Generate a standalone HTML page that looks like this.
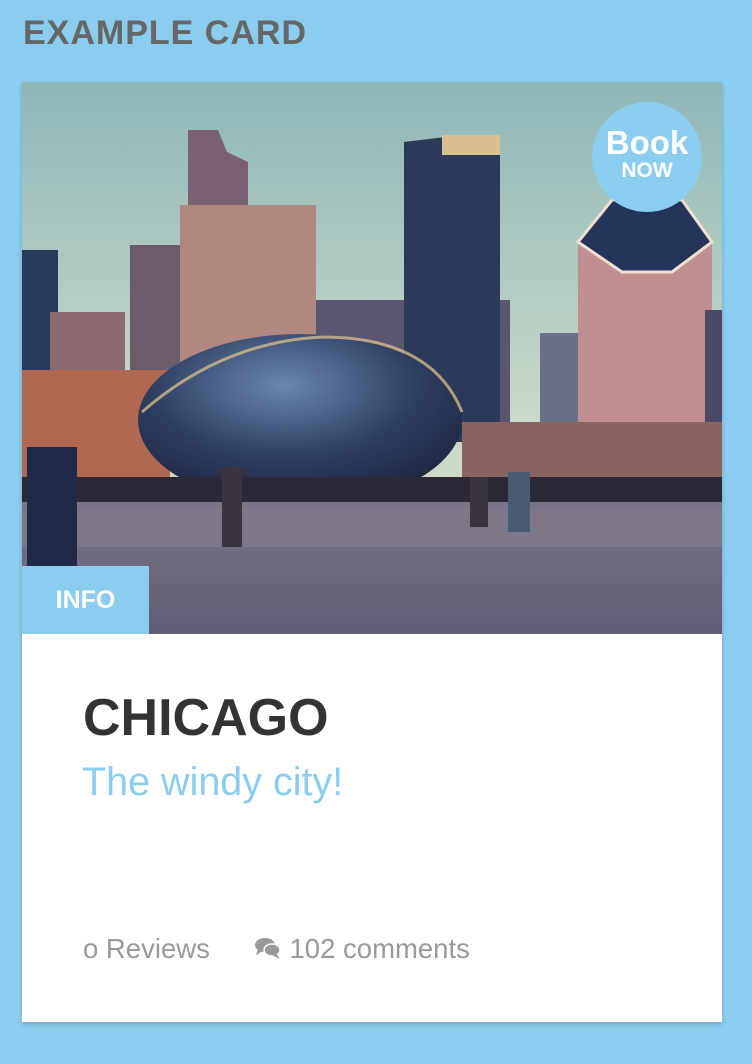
<!DOCTYPE html>
<html><head><meta charset="utf-8"><style>
html,body{margin:0;padding:0}
body{width:752px;height:1064px;background:#8acdee;font-family:"Liberation Sans",Arial,sans-serif;position:relative;overflow:hidden}
h1{position:absolute;left:23px;top:14px;margin:0;font-size:34px;font-weight:bold;color:#666;letter-spacing:1px}
.card{position:absolute;left:22px;top:82px;width:700px;height:940px;background:#fff;box-shadow:0 2px 4px rgba(0,0,0,0.2)}
.img{position:absolute;left:0;top:0;width:700px;height:552px;overflow:hidden}
.book{position:absolute;left:570px;top:20px;width:110px;height:110px;border-radius:50%;background:#8acdee;color:#fff;text-align:center;font-weight:bold}
.book .b{font-size:33px;margin-top:24px;line-height:34px}
.book .n{font-size:21px;line-height:22px}
.info{position:absolute;left:0;top:484px;width:127px;height:68px;background:#8acdee;color:#fff;font-weight:bold;font-size:25px;line-height:68px;text-align:center}
.t{position:absolute;left:61px;top:606px;margin:0;font-size:52px;font-weight:bold;color:#333}
.s{position:absolute;left:60px;top:678px;font-size:39.5px;color:#8acdee}
.f{position:absolute;left:61px;top:851px;font-size:27.5px;color:#999;white-space:nowrap}
</style></head><body>
<h1>EXAMPLE CARD</h1>
<div class="card">
<div class="img">
<svg width="700" height="552" viewBox="0 0 700 552">
<defs>
<linearGradient id="sky" x1="0" y1="0" x2="0" y2="1"><stop offset="0" stop-color="#8fb6b8"/><stop offset="0.6" stop-color="#c9d9c9"/><stop offset="1" stop-color="#d8dcc4"/></linearGradient>
<linearGradient id="gr" x1="0" y1="0" x2="0" y2="1"><stop offset="0" stop-color="#7a7488"/><stop offset="1" stop-color="#5f5d74"/></linearGradient>
<radialGradient id="bean" cx="0.45" cy="0.3" r="0.7"><stop offset="0" stop-color="#6a86b0"/><stop offset="0.6" stop-color="#2d3d60"/><stop offset="1" stop-color="#1e2640"/></radialGradient>
</defs>
<rect width="700" height="552" fill="url(#sky)"/>
<rect x="0" y="168" width="36" height="150" fill="#2a3a5c"/>
<rect x="28" y="230" width="75" height="120" fill="#8a6a70"/>
<rect x="108" y="163" width="52" height="180" fill="#6d5a6a"/>
<polygon points="166,48 196,48 205,70 226,80 226,140 166,140" fill="#7a6070"/>
<rect x="158" y="123" width="136" height="240" fill="#b08880"/>
<rect x="294" y="218" width="194" height="140" fill="#5a5570"/>
<polygon points="382,60 440,53 478,70 478,360 382,360" fill="#2c3a5a"/>
<rect x="420" y="53" width="58" height="20" fill="#d8c090"/>
<rect x="518" y="251" width="50" height="110" fill="#6a7088"/>
<polygon points="556,160 590,118 660,118 690,160 690,370 556,370" fill="#c09090"/>
<polygon points="556,160 590,118 660,118 690,160 650,190 600,190" fill="#24345a" stroke="#f0e0d0" stroke-width="3"/>
<rect x="683" y="228" width="17" height="150" fill="#4a4a68"/>
<rect x="0" y="288" width="148" height="130" fill="#b06850"/>
<rect x="440" y="340" width="260" height="80" fill="#8a6460"/>
<ellipse cx="278" cy="338" rx="162" ry="86" fill="url(#bean)"/>
<path d="M120,330 Q200,260 300,255 Q410,255 440,330" fill="none" stroke="#e8c890" stroke-width="3" opacity="0.7"/>
<rect x="0" y="395" width="700" height="30" fill="#2c2838"/>
<rect x="0" y="420" width="700" height="132" fill="url(#gr)"/>
<rect x="0" y="425" width="700" height="40" fill="#7e7689"/>
<rect x="5" y="365" width="50" height="120" fill="#1e2a48"/>
<rect x="200" y="385" width="20" height="80" fill="#3a3440"/>
<rect x="448" y="395" width="18" height="50" fill="#3a3440"/>
<rect x="486" y="390" width="22" height="60" fill="#4a5a70"/>
</svg>
<div class="book"><div class="b">Book</div><div class="n">NOW</div></div>
<div class="info">INFO</div>
</div>
<div class="t">CHICAGO</div>
<div class="s">The windy city!</div>
<div class="f">o Reviews<span style="display:inline-block;width:44px"></span><svg width="28" height="24" viewBox="0 0 28 24" style="vertical-align:-2px"><ellipse cx="11" cy="9" rx="10" ry="7" fill="#999"/><path d="M4,13 L2,19 L9,15Z" fill="#999"/><ellipse cx="18" cy="14" rx="8" ry="6" fill="#999" stroke="#fff" stroke-width="1.5"/><path d="M22,17 L26,23 L18,19Z" fill="#999"/></svg> 102 comments</div>
</div>
</body></html>
